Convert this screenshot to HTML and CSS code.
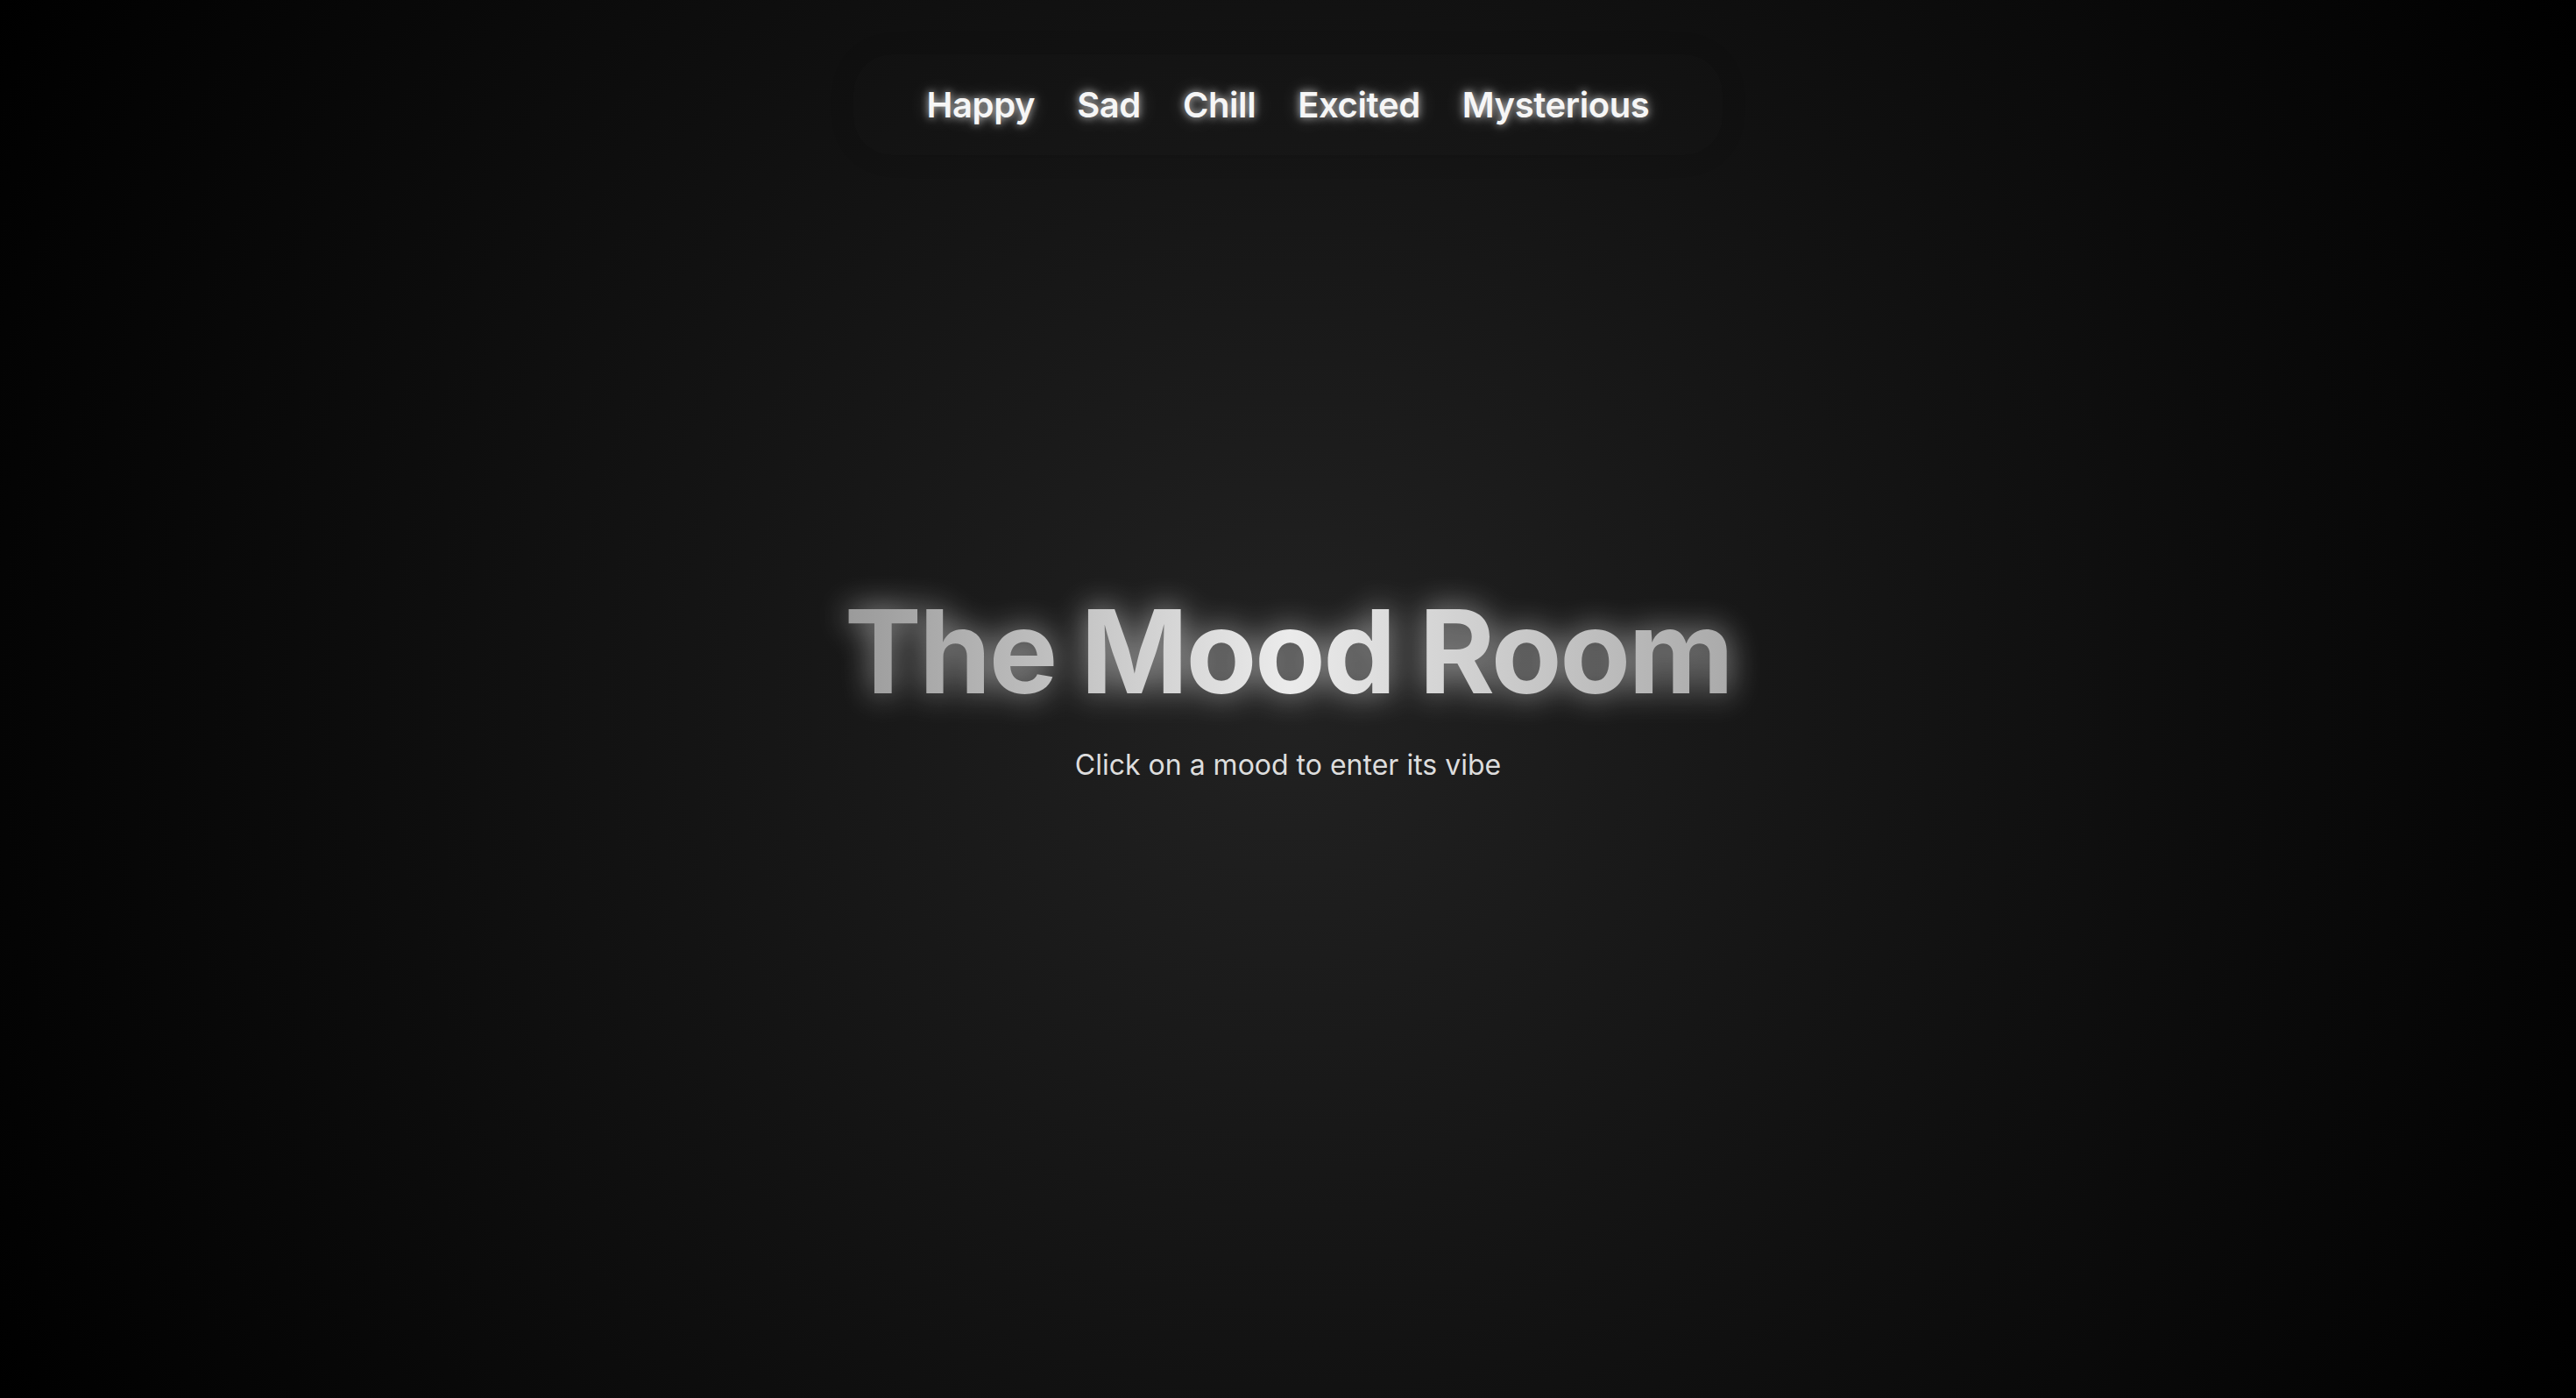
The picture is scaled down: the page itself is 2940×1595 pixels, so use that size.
FILE: index.html
```html
<!DOCTYPE html>
<html lang="en">
<head>
<meta charset="utf-8">
<title>The Mood Room</title>
<link rel="stylesheet" href="styles.css">
</head>
<body>
<div class="page">
  <nav class="moods">
    <a class="mood" href="#">Happy</a>
    <a class="mood" href="#">Sad</a>
    <a class="mood" href="#">Chill</a>
    <a class="mood" href="#">Excited</a>
    <a class="mood" href="#">Mysterious</a>
  </nav>
  <main class="hero">
    <h1 class="title">The Mood Room</h1>
    <p class="subtitle">Click on a mood to enter its vibe</p>
  </main>
</div>
</body>
</html>
```
FILE: styles.css
```css
* { box-sizing: border-box; }
html, body {
  margin: 0;
  height: 100%;
}
body {
  font-family: Inter, "Noto Sans", sans-serif;
  background: radial-gradient(circle at 50% 50%, #222222 0%, #000000 100%);
  color: #fff;
  overflow: hidden;
}
.page {
  height: 100vh;
  display: flex;
  flex-direction: column;
  align-items: center;
}
.moods {
  margin-top: 62px;
  display: flex;
  gap: 48px;
  padding: 33px 84px;
  border-radius: 44px;
  background: rgba(255, 255, 255, 0.006);
  box-shadow: 0 0 30px rgba(0, 0, 0, 0.12);
}
.mood {
  color: #f6f6f6;
  text-decoration: none;
  font-size: 40px;
  font-weight: 600;
  letter-spacing: -0.01em;
  text-shadow: 0 0 10px rgba(255, 255, 255, 0.75), 0 0 22px rgba(255, 255, 255, 0.3);
}
.hero {
  flex: 1;
  display: flex;
  flex-direction: column;
  align-items: center;
  justify-content: center;
  padding-bottom: 216px;
}
.title {
  margin: 0;
  font-size: 132px;
  font-weight: 700;
  letter-spacing: -0.02em;
  line-height: 1.2;
  background: linear-gradient(90deg, #9a9a9a 0%, #ebebeb 50%, #aaaaaa 100%);
  -webkit-background-clip: text;
  background-clip: text;
  color: transparent;
  filter: drop-shadow(0 0 18px rgba(255, 255, 255, 0.6));
}
.subtitle {
  margin: 30px 0 0;
  font-size: 32px;
  color: #dddddd;
}
```
